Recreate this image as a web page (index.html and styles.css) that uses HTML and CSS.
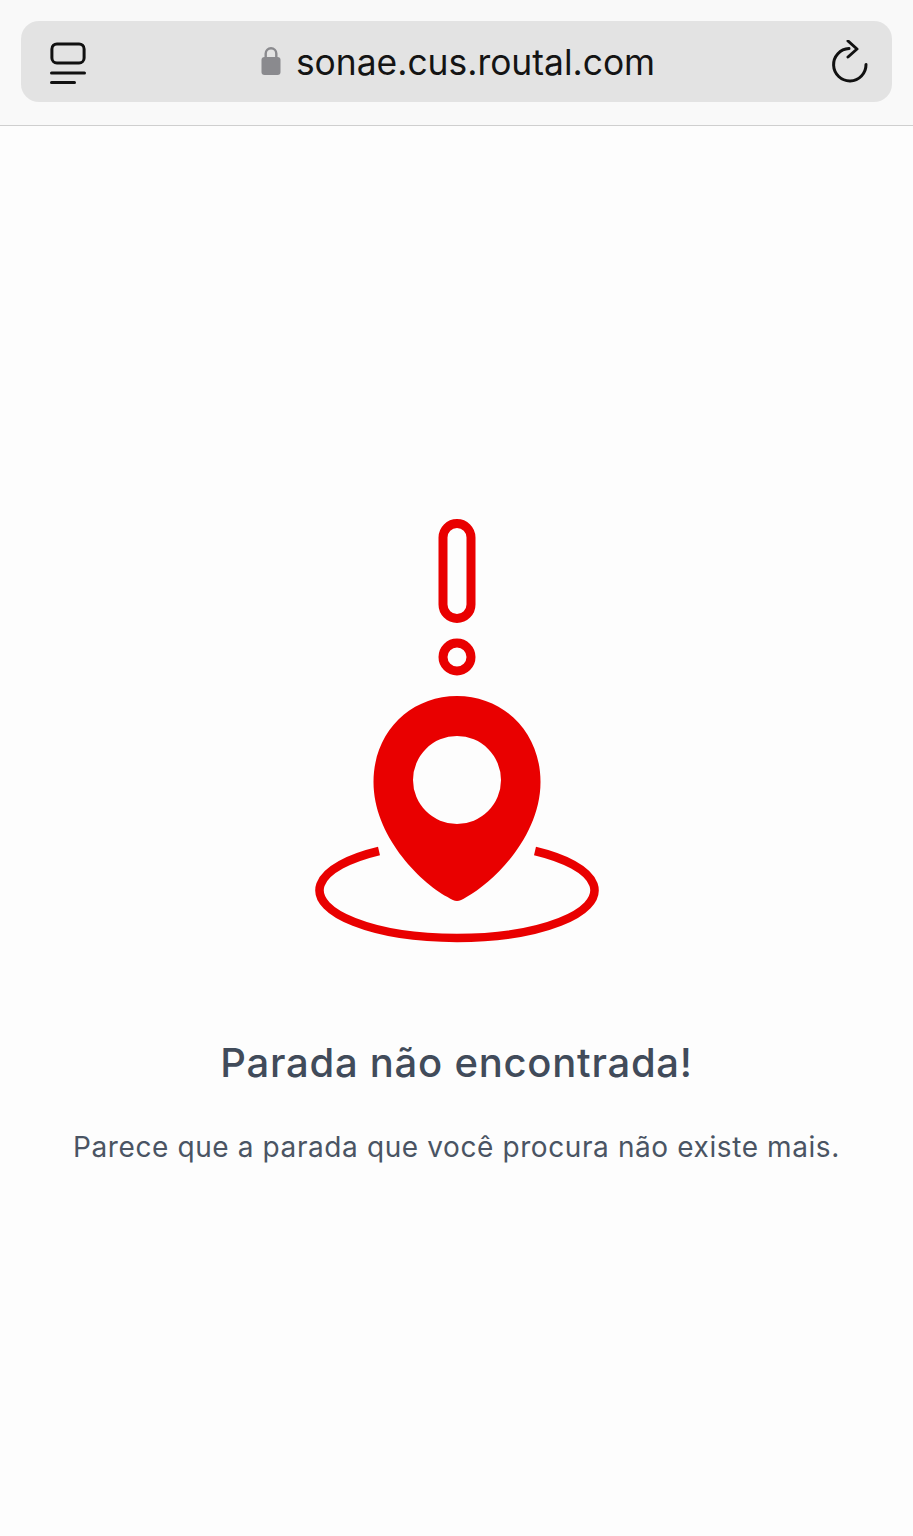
FILE: index.html
```html
<!DOCTYPE html>
<html lang="pt-BR">
<head>
    <meta charset="UTF-8">
    <meta name="viewport" content="width=device-width, initial-scale=1.0">
    <title>Parada não encontrada</title>
    <link rel="stylesheet" href="styles.css">
</head>
<body>
    <header class="toolbar">
        <div class="address-bar">
            <svg class="tabs-icon" width="36" height="42" viewBox="0 0 36 42" fill="none" stroke="#111" stroke-width="3" stroke-linecap="round">
                <rect x="1.9" y="1.9" width="32.2" height="19" rx="5"/>
                <path d="M1.500 31H34.500"/>
                <path d="M1.500 40.500H24.500"/>
            </svg>
            <div class="url">
                <svg class="lock-icon" width="20" height="28" viewBox="0 0 20 28">
                    <path d="M4.700 11V6.500a5.300 5.300 0 0 1 10.600 0V11" fill="none" stroke="#8a8a8e" stroke-width="2.400"/>
                    <rect x="0.500" y="10" width="19" height="18" rx="3" fill="#8a8a8e"/>
                </svg>
                <span>sonae.cus.routal.com</span>
            </div>
            <svg class="reload-icon" width="38" height="44" viewBox="0 0 38 44" fill="none" stroke="#111" stroke-width="3" stroke-linecap="round" stroke-linejoin="round">
                <path d="M36 24.500A16.200 16.200 0 1 1 19 8.500"/>
                <path d="M18 1L27 9L18 17"/>
            </svg>
        </div>
    </header>

    <main class="content">
        <svg class="not-found-icon" width="310" height="440" viewBox="1.500 0 310 440">
            <g fill="none" stroke="#e90000">
                <rect x="142.500" y="13.500" width="28" height="95" rx="14" stroke-width="9"/>
                <circle cx="156.500" cy="147" r="14" stroke-width="9"/>
                <path d="M78.500 341A137.500 47.700 0 1 0 234.500 341" stroke-width="8.500"/>
            </g>
            <path fill="#e90000" fill-rule="evenodd" d="M156.500 186C110 186 73 222 73 272C73 325 118 371 147 387C151 389.500 154 391 156.500 391C159 391 162 389.500 166 387C195 371 240 325 240 272C240 222 203 186 156.500 186ZM156.500 226A44 44 0 1 0 156.500 314A44 44 0 1 0 156.500 226Z"/>
        </svg>
        <h1 class="title">Parada não encontrada!</h1>
        <p class="message">Parece que a parada que você procura não existe mais.</p>
    </main>
</body>
</html>
```

FILE: styles.css
```css
* {
    margin: 0;
    padding: 0;
    box-sizing: border-box;
}

body {
    font-family: Inter, "Liberation Sans", sans-serif;
    background-color: #fdfdfd;
    min-height: 1536px;
}

.toolbar {
    height: 126px;
    padding: 21px 21px 0;
    background-color: #f9f9f9;
    border-bottom: 1px solid #cfcfcf;
}

.address-bar {
    height: 81px;
    display: flex;
    align-items: center;
    justify-content: space-between;
    padding: 0 24px 0 29px;
    border-radius: 18px;
    background-color: #e3e3e3;
}

.tabs-icon {
    margin-top: 3px;
}

.reload-icon {
    margin-top: 1px;
}

.url {
    display: flex;
    align-items: center;
    gap: 15px;
    margin-top: 1px;
    font-size: 35.400px;
    color: #141414;
}

.lock-icon {
    margin-top: -2px;
}

.content {
    display: flex;
    flex-direction: column;
    align-items: center;
    padding-top: 384px;
}

.not-found-icon {
    display: block;
}

.title {
    margin-top: 88px;
    font-size: 40px;
    line-height: 50px;
    font-weight: 500;
    letter-spacing: 0.750px;
    color: #414b5a;
}

.message {
    margin-top: 41px;
    font-size: 28px;
    line-height: 36px;
    letter-spacing: 0.600px;
    color: #4a5463;
}
```
